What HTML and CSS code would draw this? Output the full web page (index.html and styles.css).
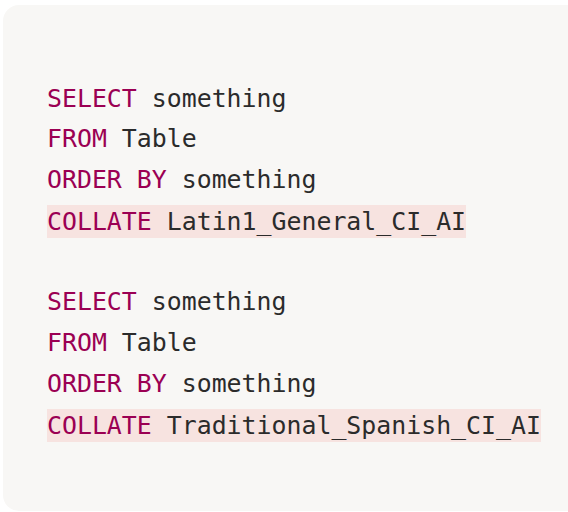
FILE: index.html
```html
<!DOCTYPE html>
<html>
<head>
<meta charset="utf-8">
<link rel="stylesheet" href="styles.css">
</head>
<body>
<div class="card">
<pre class="code"><div class="line"><span class="kw">SELECT</span> something</div><div class="line"><span class="kw">FROM</span> Table</div><div class="line"><span class="kw">ORDER BY</span> something</div><div class="line"><span class="hl"><span class="kw">COLLATE</span> Latin1_General_CI_AI</span></div><div class="line"> </div><div class="line"><span class="kw">SELECT</span> something</div><div class="line"><span class="kw">FROM</span> Table</div><div class="line"><span class="kw">ORDER BY</span> something</div><div class="line"><span class="hl"><span class="kw">COLLATE</span> Traditional_Spanish_CI_AI</span></div></pre>
</div>
</body>
</html>
```

FILE: styles.css
```css
html, body {
  margin: 0;
  padding: 0;
  background: #ffffff;
  overflow: hidden;
  width: 568px;
  height: 512px;
}
.card {
  margin: 5px 0 0 3px;
  width: 565px;
  height: 506px;
  box-sizing: border-box;
  background: #f8f7f5;
  border-radius: 16px 0 0 16px;
  padding: 73.5px 0 0 44px;
}
.code {
  margin: 0;
  font-family: "DejaVu Sans Mono", monospace;
  font-size: 24.87px;
  color: #2b2b2b;
}
.line {
  height: 40.8px;
  line-height: 40.8px;
  white-space: pre;
}
.kw {
  color: #9b0053;
}
.hl {
  display: inline-block;
  background: #f7e3e0;
  line-height: 33px;
  vertical-align: middle;
}
```
